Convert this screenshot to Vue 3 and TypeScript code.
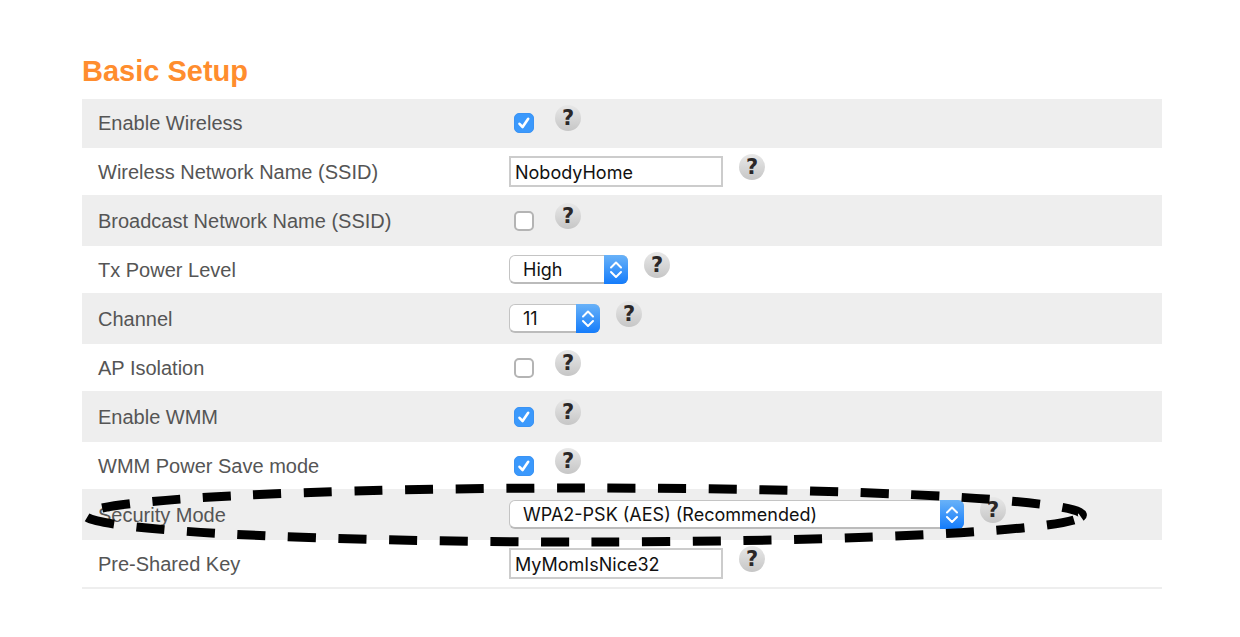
<script setup lang="ts">
import { reactive } from 'vue'

interface Setting {
  id: string
  label: string
  kind: 'checkbox' | 'text' | 'select'
  value: string | boolean
  options?: string[]
  size?: 'small' | 'medium' | 'large'
  marked?: boolean
}

const settings = reactive<Setting[]>([
  { id: 'wireless', label: 'Enable Wireless', kind: 'checkbox', value: true },
  { id: 'ssid', label: 'Wireless Network Name (SSID)', kind: 'text', value: 'NobodyHome' },
  { id: 'broadcast', label: 'Broadcast Network Name (SSID)', kind: 'checkbox', value: false },
  { id: 'power', label: 'Tx Power Level', kind: 'select', value: 'High', options: ['High'], size: 'medium' },
  { id: 'channel', label: 'Channel', kind: 'select', value: '11', options: ['11'], size: 'small' },
  { id: 'isolation', label: 'AP Isolation', kind: 'checkbox', value: false },
  { id: 'wmm', label: 'Enable WMM', kind: 'checkbox', value: true },
  { id: 'powersave', label: 'WMM Power Save mode', kind: 'checkbox', value: true },
  {
    id: 'security',
    label: 'Security Mode',
    kind: 'select',
    value: 'WPA2-PSK (AES) (Recommended)',
    options: ['WPA2-PSK (AES) (Recommended)'],
    size: 'large',
    marked: true,
  },
  { id: 'key', label: 'Pre-Shared Key', kind: 'text', value: 'MyMomIsNice32' },
])
</script>

<template>
  <main class="page">
    <h1 class="title">Basic Setup</h1>
    <form class="settings" @submit.prevent>
      <div v-for="s in settings" :key="s.id" class="row">
        <label class="label" :for="s.id">{{ s.label }}</label>
        <div class="field">
          <span v-if="s.kind === 'checkbox'" class="check">
            <input :id="s.id" v-model="s.value" class="box" type="checkbox" />
            <svg v-if="s.value" class="tick" viewBox="0 0 20 20" aria-hidden="true">
              <path d="M5.5 10.8 L8.6 14 L14.2 5.8" />
            </svg>
          </span>
          <input v-else-if="s.kind === 'text'" :id="s.id" v-model="s.value" class="text" type="text" />
          <span v-else class="picker" :class="s.size">
            <select :id="s.id" v-model="s.value" class="select">
              <option v-for="o in s.options" :key="o">{{ o }}</option>
            </select>
            <svg class="arrows" viewBox="0 0 24 29" aria-hidden="true">
              <path d="M7 12.5 L12 7.5 L17 12.5 M7 17 L12 22 L17 17" />
            </svg>
          </span>
          <button class="help" type="button" :aria-label="'Help: ' + s.label">?</button>
        </div>
        <svg v-if="s.marked" class="mark" viewBox="0 0 1010 70" aria-hidden="true">
          <path d="M992 40 A498 27 0 0 1 501 62 A498 27 0 0 1 501 8 A498 27 0 0 1 999 37" />
        </svg>
      </div>
    </form>
  </main>
</template>

<style>
body {
  margin: 0;
  background: #fff;
}
</style>

<style scoped>
.page {
  padding: 54px 78px 48px 82px;
  font-family: "Liberation Sans", Arial, sans-serif;
}
.title {
  margin: 0 0 11px;
  font-size: 29px;
  line-height: 34px;
  font-weight: 700;
  color: #ff8d2e;
}
.row {
  position: relative;
  display: grid;
  grid-template-columns: 411px 1fr;
  align-items: center;
  box-sizing: border-box;
  min-height: 49px;
  padding-left: 16px;
  border-bottom: 2px solid #eee;
}
.row:nth-child(odd) {
  background: #eee;
}
.label {
  font-size: 20px;
  line-height: 24px;
  color: #555;
}
.field {
  display: flex;
  align-items: center;
  gap: 16px;
}
.check {
  position: relative;
  width: 20px;
  height: 20px;
  margin: 0 5px;
}
.box {
  appearance: none;
  display: block;
  box-sizing: border-box;
  width: 20px;
  height: 20px;
  margin: 0;
  border: 2px solid #b4b4b4;
  border-radius: 5px;
  background: #fff;
}
.box:checked {
  border: 1px solid #3a93f4;
  background: #3b99fc;
}
.tick {
  position: absolute;
  inset: 0;
  fill: none;
  stroke: #fff;
  stroke-width: 2.6;
  stroke-linecap: round;
  stroke-linejoin: round;
  pointer-events: none;
}
.text {
  box-sizing: border-box;
  width: 214px;
  height: 31px;
  margin: 0;
  padding: 2px 4px 0;
  border: 2px solid #ccc;
  border-radius: 0;
  background: #fff;
  font: 18px/24px Inter, sans-serif;
  color: #111;
}
.picker {
  position: relative;
  height: 29px;
}
.small {
  width: 91px;
}
.medium {
  width: 119px;
}
.large {
  width: 455px;
}
.select {
  appearance: none;
  display: block;
  box-sizing: border-box;
  width: 100%;
  height: 29px;
  margin: 0;
  padding: 2px 28px 0 13px;
  border: 1px solid #c4c4c4;
  border-bottom: 2px solid #bbb;
  border-radius: 6px;
  background: #fff;
  font: 18px/24px Inter, sans-serif;
  color: #111;
}
.arrows {
  position: absolute;
  top: 0;
  right: 0;
  width: 24px;
  height: 29px;
  border-radius: 0 6px 6px 0;
  background: linear-gradient(#69b2f8, #147cfb);
  fill: none;
  stroke: #fff;
  stroke-width: 2;
  stroke-linecap: round;
  stroke-linejoin: round;
  pointer-events: none;
}
.help {
  width: 26px;
  height: 26px;
  margin: 0 0 10px;
  padding: 0;
  border: 0;
  border-radius: 50%;
  background: linear-gradient(#e8e8e8, #c6c6c6);
  font: 700 21px/26px "DejaVu Sans", sans-serif;
  text-align: center;
  color: #2b2727;
}
.mark {
  position: absolute;
  top: -11px;
  left: 0;
  width: 1010px;
  height: 70px;
  overflow: visible;
  fill: none;
  stroke: #000;
  stroke-width: 9;
  stroke-dasharray: 28 22.6;
  pointer-events: none;
}
</style>
